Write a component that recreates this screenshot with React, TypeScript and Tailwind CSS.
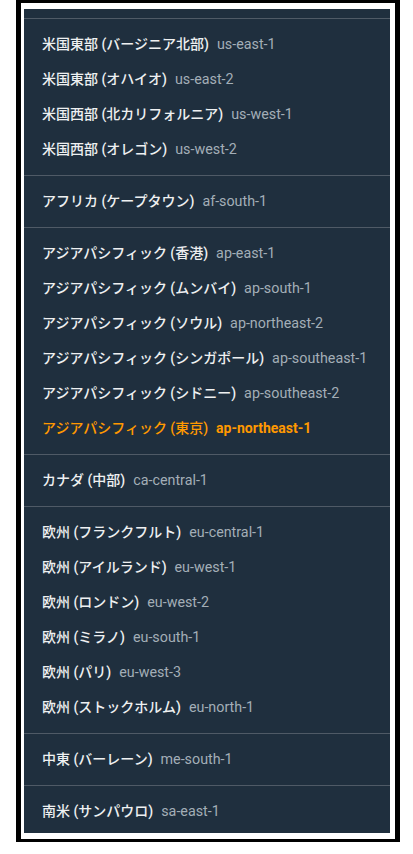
import React from "react";

type Region = { name: string; code: string; active?: boolean };

const groups: Region[][] = [
  [
    { name: "米国東部 (バージニア北部)", code: "us-east-1" },
    { name: "米国東部 (オハイオ)", code: "us-east-2" },
    { name: "米国西部 (北カリフォルニア)", code: "us-west-1" },
    { name: "米国西部 (オレゴン)", code: "us-west-2" },
  ],
  [{ name: "アフリカ (ケープタウン)", code: "af-south-1" }],
  [
    { name: "アジアパシフィック (香港)", code: "ap-east-1" },
    { name: "アジアパシフィック (ムンバイ)", code: "ap-south-1" },
    { name: "アジアパシフィック (ソウル)", code: "ap-northeast-2" },
    { name: "アジアパシフィック (シンガポール)", code: "ap-southeast-1" },
    { name: "アジアパシフィック (シドニー)", code: "ap-southeast-2" },
    { name: "アジアパシフィック (東京)", code: "ap-northeast-1", active: true },
  ],
  [{ name: "カナダ (中部)", code: "ca-central-1" }],
  [
    { name: "欧州 (フランクフルト)", code: "eu-central-1" },
    { name: "欧州 (アイルランド)", code: "eu-west-1" },
    { name: "欧州 (ロンドン)", code: "eu-west-2" },
    { name: "欧州 (ミラノ)", code: "eu-south-1" },
    { name: "欧州 (パリ)", code: "eu-west-3" },
    { name: "欧州 (ストックホルム)", code: "eu-north-1" },
  ],
  [{ name: "中東 (バーレーン)", code: "me-south-1" }],
  [{ name: "南米 (サンパウロ)", code: "sa-east-1" }],
];

export default function App() {
  return (
    <div
      className="w-[413px] h-[854px] bg-white pl-[16px]"
      style={{ fontFamily: 'Roboto, "Noto Sans CJK JP", sans-serif' }}
    >
      <div className="w-[384px] border-black border-l-[5px] border-r-[5px] border-t-[3px] border-b-[3px] bg-white pl-[3px] pr-[5px] pt-[6px] pb-[6px]">
        <div className="w-[366px] h-[824px] bg-[#1f2f3e] pt-[9px] overflow-hidden">
          {groups.map((g, gi) => (
            <div
              key={gi}
              className={`border-t border-[#4f5a66] pt-2 ${gi === groups.length - 1 ? "pb-1" : "pb-2"}`}
            >
              {g.map((r) => (
                <div
                  key={r.code}
                  className="h-[35px] flex items-center pl-[18px] text-[14px] whitespace-nowrap"
                >
                  <span
                    className={`font-medium ${r.active ? "text-[#ff9900]" : "text-[#eef0f1]"}`}
                  >
                    {r.name}
                  </span>
                  <span
                    className={`ml-[8px] ${r.active ? "text-[#ff9900] font-bold" : "text-[#a3aeb7] text-[14.3px]"}`}
                  >
                    {r.code}
                  </span>
                </div>
              ))}
            </div>
          ))}
        </div>
      </div>
    </div>
  );
}
